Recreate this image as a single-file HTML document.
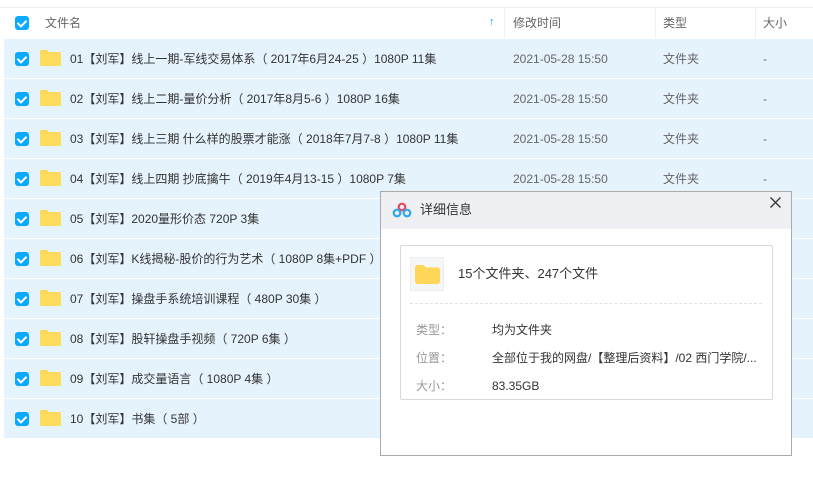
<!DOCTYPE html><html><head><meta charset="utf-8"><style>
*{margin:0;padding:0;box-sizing:border-box}
body{width:813px;height:498px;background:#fff;font-family:"Liberation Sans","Noto Sans CJK SC",sans-serif;font-size:12px;color:#333;position:relative;overflow:hidden}
.top{position:absolute;left:0;top:0;width:813px;height:8px;border-bottom:1px solid #eef0f3}
.hdr{position:absolute;left:4px;top:8px;width:809px;height:30px;color:#666}
.row{position:absolute;left:4px;width:809px;height:39px;background:#e5f3fd}
.cb{position:absolute;left:11px;width:14px;height:14px;background:#09aaff;border-radius:3px}
.cb:after{content:"";position:absolute;left:4px;top:1.5px;width:4px;height:7px;border:solid #fff;border-width:0 2px 2px 0;transform:rotate(45deg)}
.t{position:absolute;white-space:nowrap;line-height:16px;height:16px}
.fold{position:absolute;left:36px;width:21px;height:16px}
.sep{position:absolute;top:0;width:1px;height:30px;background:#eef0f3}
</style></head><body>
<div class="top"></div>
<div class="hdr"><div class="cb" style="top:8px"></div><span class="t" style="left:41px;top:7px">文件名</span><span class="t" style="left:485px;top:6px;color:#09aaff;font-size:11px">↑</span>
<div class="sep" style="left:500px"></div><span class="t" style="left:509px;top:7px">修改时间</span>
<div class="sep" style="left:651px"></div><span class="t" style="left:659px;top:7px">类型</span>
<div class="sep" style="left:751px"></div><span class="t" style="left:759px;top:7px">大小</span></div>
<div id="rows"></div>
<script>
var n=["01【刘军】线上一期-军线交易体系（ 2017年6月24-25 ）1080P 11集","02【刘军】线上二期-量价分析（ 2017年8月5-6 ）1080P 16集","03【刘军】线上三期 什么样的股票才能涨（ 2018年7月7-8 ）1080P 11集","04【刘军】线上四期 抄底擒牛（ 2019年4月13-15 ）1080P 7集","05【刘军】2020量形价态 720P 3集","06【刘军】K线揭秘-股价的行为艺术（ 1080P 8集+PDF ）","07【刘军】操盘手系统培训课程（ 480P 30集 ）","08【刘军】股轩操盘手视频（ 720P 6集 ）","09【刘军】成交量语言（ 1080P 4集 ）","10【刘军】书集（ 5部 ）"];
var h="";n.forEach(function(s,i){var y=39+i*40;h+='<div class="row" style="top:'+y+'px"><div class="cb" style="top:13px"></div><svg class="fold" style="top:11px" viewBox="0 0 21 16"><path d="M0 2a2 2 0 0 1 2-2h5l2 2h10a2 2 0 0 1 2 2v10a2 2 0 0 1-2 2H2a2 2 0 0 1-2-2z" fill="#ffd659"/><path d="M0 4h21v10a2 2 0 0 1-2 2H2a2 2 0 0 1-2-2z" fill="#ffdb5e"/></svg><span class="t" style="left:66px;top:12px">'+s+'</span>'+(i<4?'<span class="t" style="left:509px;top:12px;color:#666">2021-05-28 15:50</span><span class="t" style="left:659px;top:12px;color:#666">文件夹</span><span class="t" style="left:759px;top:12px;color:#666">-</span>':'')+'</div>';});
document.getElementById("rows").innerHTML=h;
</script>
<div style="position:absolute;left:380px;top:191px;width:412px;height:265px;background:#fff;border:1px solid #aaa">
<div style="height:37px;background:#eef0f4;position:relative">
<svg style="position:absolute;left:11px;top:10px" width="20" height="16" viewBox="0 0 20 16"><circle cx="10" cy="5" r="3.3" fill="none" stroke="#e8475e" stroke-width="2.2"/><circle cx="5" cy="11" r="3.3" fill="none" stroke="#2ea7f0" stroke-width="2.2"/><circle cx="15" cy="11" r="3.3" fill="none" stroke="#2ea7f0" stroke-width="2.2"/></svg>
<span class="t" style="left:39px;top:10px;font-size:13px">详细信息</span>
<svg style="position:absolute;left:389px;top:5px" width="11" height="11" viewBox="0 0 11 11"><path d="M0.5 0.5L10.5 10.5M10.5 0.5L0.5 10.5" stroke="#333" stroke-width="1.3"/></svg></div>
<div style="position:absolute;left:19px;top:53px;width:373px;height:155px;border:1px solid #d8d8d8;border-radius:2px">
<div style="position:absolute;left:9px;top:11px;width:34px;height:34px;border:1px solid #eee;background:#f4f6f8"><svg style="position:absolute;left:4px;top:7px" width="25" height="19" viewBox="0 0 21 16"><path d="M0 2a2 2 0 0 1 2-2h5l2 2h10a2 2 0 0 1 2 2v10a2 2 0 0 1-2 2H2a2 2 0 0 1-2-2z" fill="#ffd659"/></svg></div>
<span class="t" style="left:57px;top:20px;font-size:13px">15个文件夹、247个文件</span>
<div style="position:absolute;left:9px;top:57px;width:352px;border-top:1px dashed #dde3ea"></div>
<span class="t" style="left:15px;top:76px;color:#999">类型：</span><span class="t" style="left:91px;top:76px">均为文件夹</span>
<span class="t" style="left:15px;top:104px;color:#999">位置：</span><span class="t" style="left:91px;top:104px">全部位于我的网盘/【整理后资料】/02 西门学院/...</span>
<span class="t" style="left:15px;top:132px;color:#999">大小：</span><span class="t" style="left:91px;top:132px">83.35GB</span>
</div></div>
</body></html>
